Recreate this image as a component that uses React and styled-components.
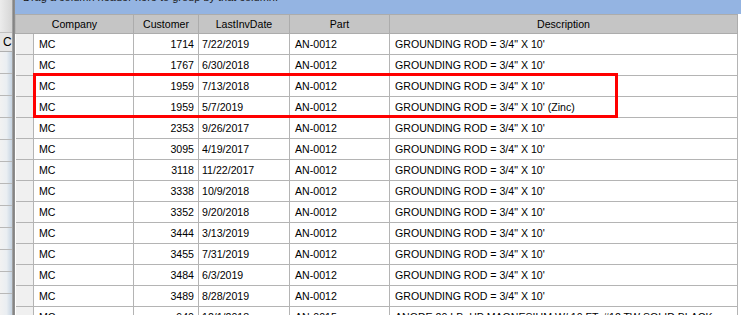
import styled, { createGlobalStyle } from 'styled-components';

const rows = [
    ['MC', '1714', '7/22/2019', 'AN-0012', 'GROUNDING ROD = 3/4" X 10\''],
    ['MC', '1767', '6/30/2018', 'AN-0012', 'GROUNDING ROD = 3/4" X 10\''],
    ['MC', '1959', '7/13/2018', 'AN-0012', 'GROUNDING ROD = 3/4" X 10\''],
    ['MC', '1959', '5/7/2019', 'AN-0012', 'GROUNDING ROD = 3/4" X 10\' (Zinc)'],
    ['MC', '2353', '9/26/2017', 'AN-0012', 'GROUNDING ROD = 3/4" X 10\''],
    ['MC', '3095', '4/19/2017', 'AN-0012', 'GROUNDING ROD = 3/4" X 10\''],
    ['MC', '3118', '11/22/2017', 'AN-0012', 'GROUNDING ROD = 3/4" X 10\''],
    ['MC', '3338', '10/9/2018', 'AN-0012', 'GROUNDING ROD = 3/4" X 10\''],
    ['MC', '3352', '9/20/2018', 'AN-0012', 'GROUNDING ROD = 3/4" X 10\''],
    ['MC', '3444', '3/13/2019', 'AN-0012', 'GROUNDING ROD = 3/4" X 10\''],
    ['MC', '3455', '7/31/2019', 'AN-0012', 'GROUNDING ROD = 3/4" X 10\''],
    ['MC', '3484', '6/3/2019', 'AN-0012', 'GROUNDING ROD = 3/4" X 10\''],
    ['MC', '3489', '8/28/2019', 'AN-0012', 'GROUNDING ROD = 3/4" X 10\''],
    ['MC', '940', '12/1/2018', 'AN-0015', 'ANODE 20 LB. HP MAGNESIUM W/ 10 FT. #12 TW SOLID BLACK'],
];

const columns = [
    { title: '', width: 18 },
    { title: 'Company', width: 100 },
    { title: 'Customer', width: 65 },
    { title: 'LastInvDate', width: 91 },
    { title: 'Part', width: 100 },
    { title: 'Description', width: 348 },
];

const App = () => {
    return (
        <>
            <GlobalStyle />
            <Screen>
                <BackPane>
                    <BackTop />
                    <BackHeader>C</BackHeader>
                    {Array.from({ length: 13 }).map((_, i) => (
                        <BackRow key={i} />
                    ))}
                </BackPane>
                <PaneEdge />
                <GridPane>
                    <GroupPanel>
                        <GroupHint>Drag a column header here to group by that column.</GroupHint>
                    </GroupPanel>
                    <Table>
                        <colgroup>
                            {columns.map((c, i) => (
                                <col key={i} style={{ width: c.width }} />
                            ))}
                        </colgroup>
                        <thead>
                            <tr>
                                <HeadCell colSpan={2}>Company</HeadCell>
                                <HeadCell>Customer</HeadCell>
                                <HeadCell>LastInvDate</HeadCell>
                                <HeadCell>Part</HeadCell>
                                <HeadCell>Description</HeadCell>
                            </tr>
                        </thead>
                        <tbody>
                            {rows.map((r, i) => (
                                <tr key={i}>
                                    <Selector />
                                    <Cell>{r[0]}</Cell>
                                    <Cell $align="right">{r[1]}</Cell>
                                    <Cell $pad={3}>{r[2]}</Cell>
                                    <Cell>{r[3]}</Cell>
                                    <Cell>{r[4]}</Cell>
                                </tr>
                            ))}
                        </tbody>
                    </Table>
                    <Highlight />
                </GridPane>
            </Screen>
        </>
    );
}

export default App;

const GlobalStyle = createGlobalStyle`
    html, body {
        margin: 0;
        padding: 0;
        background: #ffffff;
        overflow: hidden;
    }
`;

const Screen = styled.div`
    width: 742px;
    height: 315px;
    display: flex;
    overflow: hidden;
    font-family: "Liberation Sans", Arial, sans-serif;
    font-size: 10.6px;
    color: #000;
`;

const BackPane = styled.div`
    width: 12px;
    flex: none;
    display: flex;
    flex-direction: column;
    overflow: hidden;
    background: #e4e4e4;
`;

const BackTop = styled.div`
    height: 32px;
    flex: none;
    background: linear-gradient(to right, #ececec, #d6d6d6);
`;

const BackHeader = styled.div`
    height: 20px;
    flex: none;
    box-sizing: border-box;
    padding-left: 3px;
    line-height: 18px;
    font-size: 12px;
    white-space: nowrap;
    overflow: hidden;
    background: #e6e6e6;
    border-top: 1px solid #c0c0c0;
    border-bottom: 1px solid #b0b0b0;
`;

const BackRow = styled.div`
    height: 22px;
    flex: none;
    box-sizing: border-box;
    border-bottom: 1px solid #b8b8b8;
    background: linear-gradient(to right, #f2f2f2 0%, #eaeef2 55%, #c6d4e2 100%);
`;

const PaneEdge = styled.div`
    width: 3px;
    flex: none;
    background: linear-gradient(to right, #b0b0b0, #7c7c7c 60%, #9a9a9a);
`;

const GridPane = styled.div`
    position: relative;
    flex: 1;
    display: flex;
    flex-direction: column;
    background: #ffffff;
`;

const GroupPanel = styled.div`
    height: 14px;
    flex: none;
    width: 726px;
    overflow: hidden;
    background: #94b4e2;
`;

const GroupHint = styled.div`
    margin: -9px 0 0 8px;
    font-size: 11px;
    line-height: 13px;
    color: #1a1a1a;
    white-space: nowrap;
`;

const Table = styled.table`
    width: 723px;
    flex: none;
    table-layout: fixed;
    border-collapse: collapse;
    border-right: 1px solid #b4b4b4;
`;

const HeadCell = styled.th`
    height: 18px;
    padding: 0;
    font-weight: normal;
    text-align: center;
    background: #c5c5c5;
    border: 1px solid #acacac;
    border-left-color: #b8b8b8;
    white-space: nowrap;
    overflow: hidden;
`;

const Selector = styled.td`
    height: 21px;
    box-sizing: border-box;
    padding: 0;
    background: #f0f0f0;
    border: 1px solid #b4b4b4;
    border-left: none;
`;

const Cell = styled.td`
    height: 21px;
    box-sizing: border-box;
    padding: 0 ${p => (p.$align === 'right' ? 4 : 0)}px 1px ${p => p.$pad ?? 5}px;
    line-height: 12px;
    text-align: ${p => p.$align || 'left'};
    border: 1px solid #b4b4b4;
    white-space: nowrap;
    overflow: hidden;
`;

const Highlight = styled.div`
    position: absolute;
    left: 18px;
    top: 73px;
    width: 585px;
    height: 45px;
    box-sizing: border-box;
    border: 3px solid #ff0000;
    pointer-events: none;
`;
